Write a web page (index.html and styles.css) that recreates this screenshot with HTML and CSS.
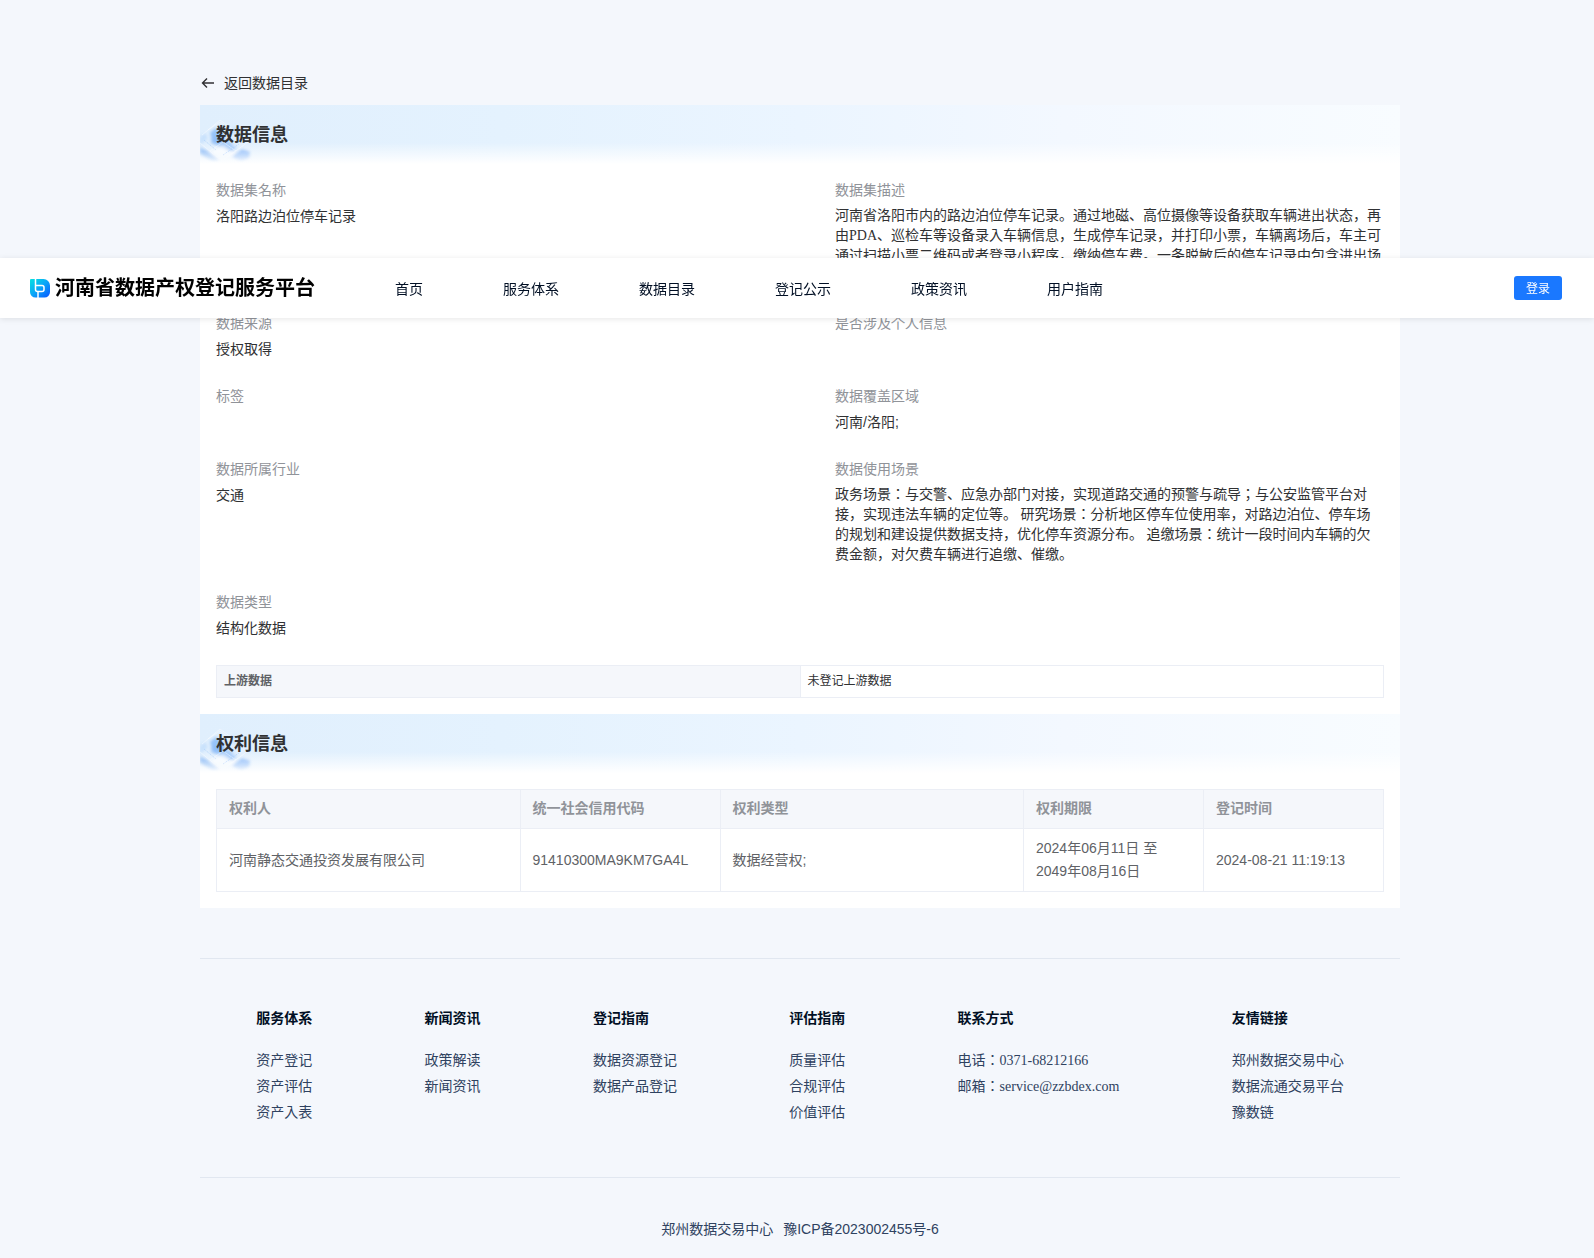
FILE: index.html
```html
<!DOCTYPE html>
<html lang="en">
<head>
  <meta charset="UTF-8">
  <meta name="viewport" content="width=device-width, initial-scale=1.0">
  <title>河南省数据产权登记服务平台</title>
  <link rel="stylesheet" href="styles.css">
</head>
<body>
  <!-- shared banner decoration -->
  <svg class="defs" width="0" height="0" aria-hidden="true">
    <defs>
      <filter id="soft" x="-20%" y="-20%" width="140%" height="140%">
        <feGaussianBlur stdDeviation="1.5"/>
      </filter>
      <linearGradient id="fade" x1="0" y1="0" x2="0" y2="1">
        <stop offset="0" stop-color="#fff"/>
        <stop offset="0.8" stop-color="#fff"/>
        <stop offset="1" stop-color="#000"/>
      </linearGradient>
      <mask id="fadeMask"><rect width="60" height="58" fill="url(#fade)"/></mask>
      <symbol id="tiles" viewBox="0 0 60 58">
        <g mask="url(#fadeMask)">
          <g filter="url(#soft)">
            <path d="M10 28l6-5 9 7-2 7-9 2z" fill="#6facf8" opacity=".65"/>
            <path d="M11 32l9-1 7 5 9 1 2 6-8 4-9-5-10-4z" fill="#8cbcf8" opacity=".65"/>
            <path d="M0 42l6 3 14 11-7 1L0 49z" fill="#8dbaf5" opacity=".7"/>
            <path d="M32 52l10-8 8 3-1 6-8 4z" fill="#8fbaf8" opacity=".7"/>
            <path d="M0 32l5-4 3 5-8 7z" fill="#b9d8fb" opacity=".6"/>
            <path d="M34 21l9 4-3 8-9-5z" fill="#bddbfb" opacity=".5"/>
            <path d="M10 47l13-7 12 8-12 9z" fill="#fff" opacity=".6"/>
            <path d="M31 38l11-6 6 4-12 8z" fill="#e6f1fe" opacity=".8"/>
          </g>
          <path d="M2 30l18-15 15 11M8 25l12-8 12 9M0 38l22 18 26-19M10 46l13-9 13 9" fill="none" stroke="#fff" stroke-width="1" opacity=".4"/>
          <path d="M4 35l12 10M23 50l16-11" fill="none" stroke="#9cc5fa" stroke-width="1" stroke-dasharray="1 1" opacity=".6"/>
        </g>
      </symbol>
      <linearGradient id="logoFill" x1="0" y1="0" x2="1" y2="1">
        <stop offset="0" stop-color="#05e3e0"/>
        <stop offset="0.5" stop-color="#0aa4f8"/>
        <stop offset="1" stop-color="#0a55ff"/>
      </linearGradient>
    </defs>
  </svg>

  <header class="header">
    <a class="logo" href="#">
      <svg width="20" height="20" viewBox="0 0 20 20" aria-hidden="true">
        <path d="M1 1h12.500a6.500 6.500 0 0 1 6.500 6.500V14a5.500 5.500 0 0 1-5.500 5.500H5.500A5.500 5.500 0 0 1 0 14V2a1 1 0 0 1 1-1z" fill="url(#logoFill)"/>
        <path d="M5.500 1v10.500a2 2 0 0 0 2 2H12a2 2 0 0 0 2-2V9.500a2 2 0 0 0-2-2H5.500M8 13.500V20" fill="none" stroke="#fff" stroke-width="1.500"/>
      </svg>
      <span>河南省数据产权登记服务平台</span>
    </a>
    <nav class="nav">
      <a href="#">首页</a>
      <a href="#">服务体系</a>
      <a href="#">数据目录</a>
      <a href="#">登记公示</a>
      <a href="#">政策资讯</a>
      <a href="#">用户指南</a>
    </nav>
    <button class="login" type="button">登录</button>
  </header>

  <div class="page">
    <a class="back" href="#">
      <svg width="16" height="16" viewBox="0 0 16 16" aria-hidden="true">
        <path d="M14 8H2.500M7 3.500L2.500 8 7 12.500" fill="none" stroke="#303133" stroke-width="1.400"/>
      </svg>
      返回数据目录
    </a>

    <main class="card">
      <div class="banner">
        <svg class="tiles" width="60" height="58" aria-hidden="true"><use href="#tiles"/></svg>
        <h2>数据信息</h2>
      </div>
      <dl class="info">
        <div class="item">
          <dt>数据集名称</dt>
          <dd>洛阳路边泊位停车记录</dd>
        </div>
        <div class="item">
          <dt>数据集描述</dt>
          <dd class="long">河南省洛阳市内的路边泊位停车记录。通过地磁、高位摄像等设备获取车辆进出状态，再由PDA、巡检车等设备录入车辆信息，生成停车记录，并打印小票，车辆离场后，车主可通过扫描小票二维码或者登录小程序，缴纳停车费。一条脱敏后的停车记录中包含进出场时间、停车时长、缴费金额等信息。</dd>
        </div>
        <div class="item">
          <dt>数据来源</dt>
          <dd>授权取得</dd>
        </div>
        <div class="item">
          <dt>是否涉及个人信息</dt>
          <dd></dd>
        </div>
        <div class="item">
          <dt>标签</dt>
          <dd></dd>
        </div>
        <div class="item">
          <dt>数据覆盖区域</dt>
          <dd>河南/洛阳;</dd>
        </div>
        <div class="item">
          <dt>数据所属行业</dt>
          <dd>交通</dd>
        </div>
        <div class="item">
          <dt>数据使用场景</dt>
          <dd class="long">政务场景：与交警、应急办部门对接，实现道路交通的预警与疏导；与公安监管平台对接，实现违法车辆的定位等。 研究场景：分析地区停车位使用率，对路边泊位、停车场的规划和建设提供数据支持，优化停车资源分布。 追缴场景：统计一段时间内车辆的欠费金额，对欠费车辆进行追缴、催缴。</dd>
        </div>
        <div class="item">
          <dt>数据类型</dt>
          <dd>结构化数据</dd>
        </div>
      </dl>
      <table class="upstream">
        <tr>
          <th scope="row">上游数据</th>
          <td>未登记上游数据</td>
        </tr>
      </table>

      <div class="banner">
        <svg class="tiles" width="60" height="58" aria-hidden="true"><use href="#tiles"/></svg>
        <h2>权利信息</h2>
      </div>
      <table class="rights">
        <colgroup>
          <col>
          <col class="col-code">
          <col>
          <col class="col-date">
          <col class="col-date">
        </colgroup>
        <thead>
          <tr>
            <th>权利人</th>
            <th>统一社会信用代码</th>
            <th>权利类型</th>
            <th>权利期限</th>
            <th>登记时间</th>
          </tr>
        </thead>
        <tbody>
          <tr>
            <td>河南静态交通投资发展有限公司</td>
            <td>91410300MA9KM7GA4L</td>
            <td>数据经营权;</td>
            <td>2024年06月11日 至 2049年08月16日</td>
            <td>2024-08-21 11:19:13</td>
          </tr>
        </tbody>
      </table>
    </main>

    <footer class="footer">
      <div class="links">
        <div class="group">
          <h3>服务体系</h3>
          <a href="#">资产登记</a>
          <a href="#">资产评估</a>
          <a href="#">资产入表</a>
        </div>
        <div class="group">
          <h3>新闻资讯</h3>
          <a href="#">政策解读</a>
          <a href="#">新闻资讯</a>
        </div>
        <div class="group">
          <h3>登记指南</h3>
          <a href="#">数据资源登记</a>
          <a href="#">数据产品登记</a>
        </div>
        <div class="group">
          <h3>评估指南</h3>
          <a href="#">质量评估</a>
          <a href="#">合规评估</a>
          <a href="#">价值评估</a>
        </div>
        <div class="group">
          <h3>联系方式</h3>
          <p>电话：0371-68212166</p>
          <p>邮箱：service@zzbdex.com</p>
        </div>
        <div class="group">
          <h3>友情链接</h3>
          <a href="#">郑州数据交易中心</a>
          <a href="#">数据流通交易平台</a>
          <a href="#">豫数链</a>
        </div>
      </div>
      <div class="copyright">
        <span>郑州数据交易中心</span>
        <a href="#">豫ICP备2023002455号-6</a>
      </div>
    </footer>
  </div>
</body>
</html>
```

FILE: styles.css
```css
* {
  box-sizing: border-box;
}

body {
  margin: 0;
  background: #f4f7fc;
  color: #303133;
  font-family: "Liberation Sans", "Noto Sans CJK JP", sans-serif;
  font-size: 14px;
  line-height: 20px;
}

a {
  color: inherit;
  text-decoration: none;
}

h2, h3, p, dl, dd {
  margin: 0;
}

.defs {
  position: absolute;
}

/* header floats over the page */
.header {
  position: fixed;
  top: 258px;
  left: 0;
  right: 0;
  z-index: 10;
  display: flex;
  align-items: center;
  height: 60px;
  padding: 0 32px 0 30px;
  background: #fff;
  box-shadow: 0 1px 6px rgba(0, 0, 0, 0.1);
}

.logo {
  display: flex;
  align-items: center;
  gap: 5px;
  color: #000;
  font-size: 20px;
  font-weight: 600;
}

.nav {
  display: flex;
  flex: 1;
  gap: 80px;
  padding: 2px 0 0 80px;
  color: #010f24;
}

.login {
  width: 48px;
  height: 24px;
  padding: 0 0 2px;
  border: none;
  border-radius: 3px;
  background: #1a78ff;
  color: #fff;
  font-family: inherit;
  font-size: 12px;
  cursor: pointer;
}

.page {
  max-width: 1206px;
  margin: 0 auto;
  padding: 73px 0 0 6px;
}

.back {
  display: flex;
  align-items: center;
  gap: 8px;
  margin-bottom: 12px;
}

.card {
  padding-bottom: 16px;
  background: #fff;
}

.banner {
  position: relative;
  padding: 17px 16px 16px;
  background:
    linear-gradient(to bottom, rgba(255, 255, 255, 0) 64%, #fff 100%),
    linear-gradient(to right, #e0effd, #e4f2fe 25%, #ebf5ff 50%, #f3f8ff 72%, #f8fcff);
}

.banner h2 {
  position: relative;
  font-size: 18px;
  font-weight: 600;
  line-height: 26px;
}

.tiles {
  position: absolute;
  top: 0;
  left: 0;
}

.info {
  display: flex;
  flex-wrap: wrap;
  justify-content: space-between;
  padding: 16px 16px 0;
}

.item {
  width: 47%;
  margin-bottom: 27px;
}

.item dt {
  margin-bottom: 6px;
  color: #909399;
}

.item dd {
  min-height: 20px;
}

.item .long {
  font-family: "Liberation Serif", "Noto Sans CJK JP", serif;
}

table {
  width: calc(100% - 32px);
  margin: 0 16px;
  border-collapse: collapse;
  table-layout: fixed;
}

th, td {
  border: 1px solid #ebeef5;
  text-align: left;
}

th {
  background: #f5f7fb;
}

.upstream {
  margin-bottom: 16px;
  font-size: 12px;
}

.upstream th,
.upstream td {
  padding: 5px 7px 6px;
}

.upstream th {
  color: #606266;
}

.rights {
  margin-top: 16px;
  color: #606266;
  line-height: 23px;
}

.rights th,
.rights td {
  padding: 8px 12px;
}

.rights th {
  padding: 7px 12px 8px;
  color: #909399;
}

.col-code {
  width: 200px;
}

.col-date {
  width: 180px;
}

.footer {
  margin-top: 50px;
  color: #2f4260;
}

.links {
  display: flex;
  justify-content: space-around;
  min-height: 220px;
  padding: 50px 0;
  border-top: 1px solid #e1e7f0;
  border-bottom: 1px solid #e1e7f0;
  font-family: "Liberation Serif", "Noto Sans CJK JP", serif;
}

.group {
  display: flex;
  flex-direction: column;
  gap: 6px;
}

.group h3 {
  margin-bottom: 16px;
  color: #010f24;
  font-size: 14px;
}

.copyright {
  display: flex;
  justify-content: center;
  gap: 10px;
  padding: 41px 0 19px;
}
```
